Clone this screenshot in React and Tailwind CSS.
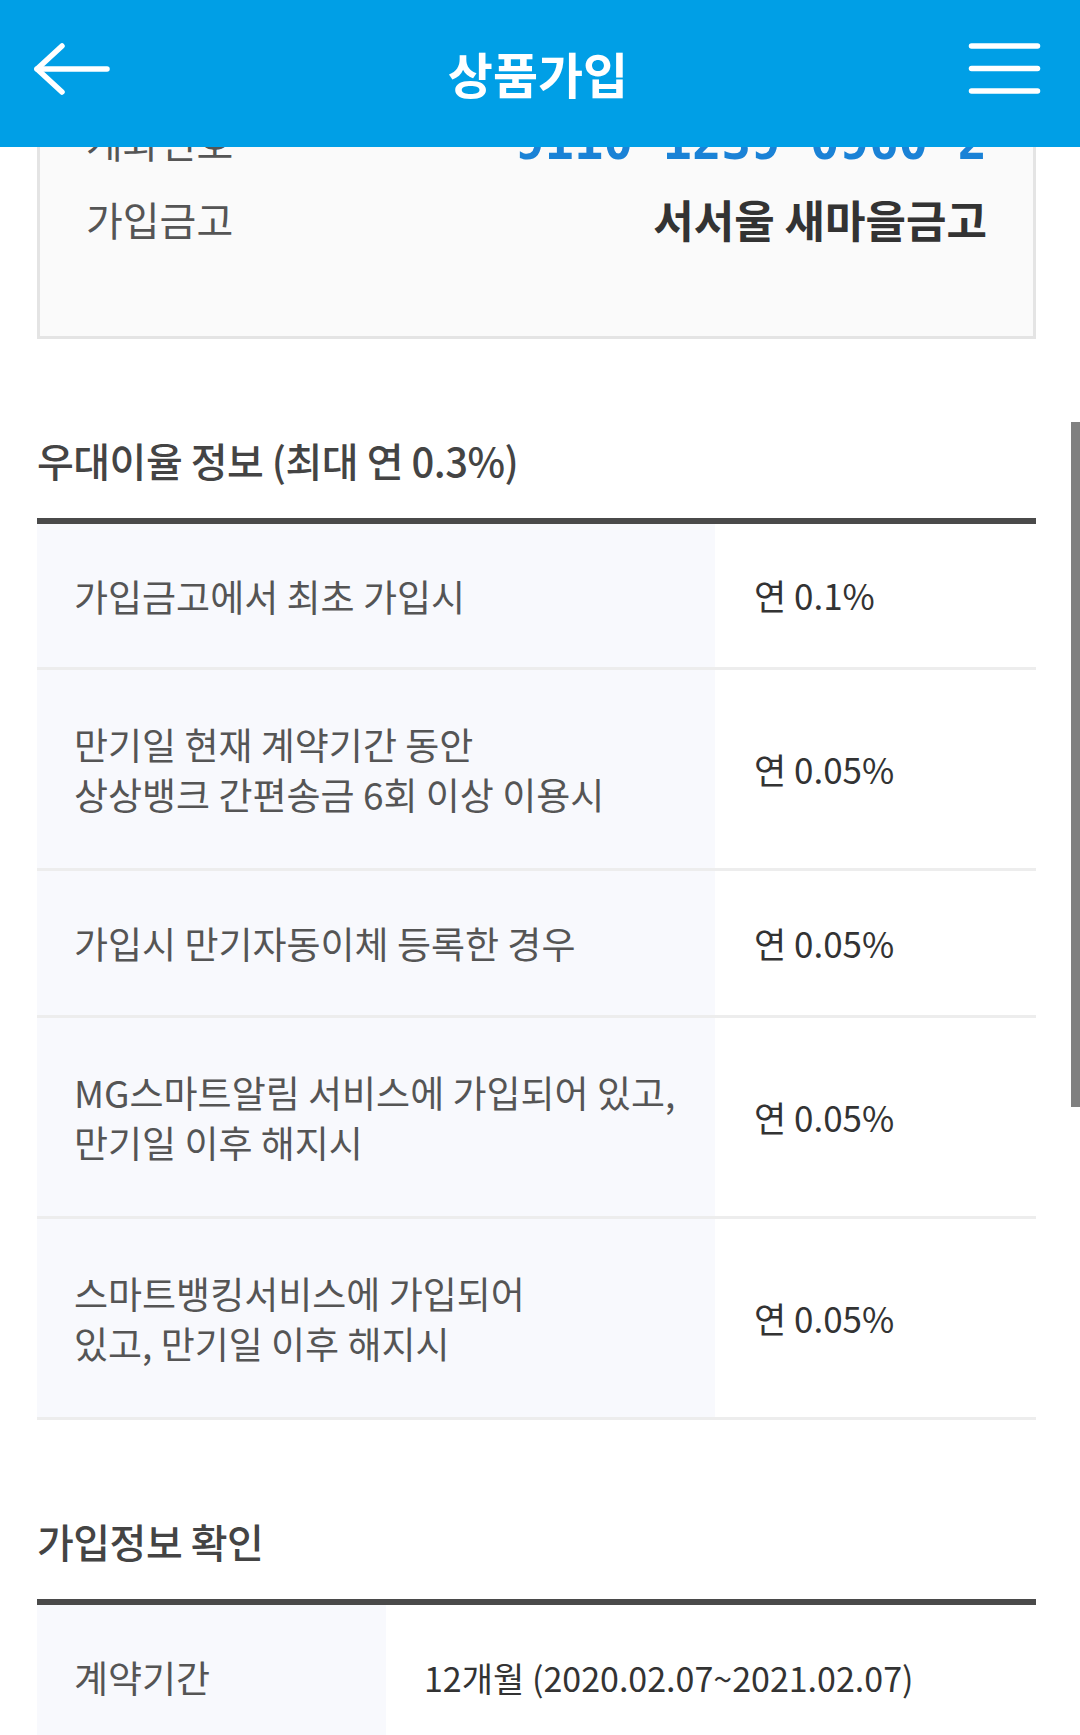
import React from 'react';

const rates = [
  { lines: ['가입금고에서 최초 가입시'], rate: '연 0.1%', height: 'h-[146px]' },
  { lines: ['만기일 현재 계약기간 동안', '상상뱅크 간편송금 6회 이상 이용시'], rate: '연 0.05%', height: 'h-[201px]' },
  { lines: ['가입시 만기자동이체 등록한 경우'], rate: '연 0.05%', height: 'h-[147px]' },
  { lines: ['MG스마트알림 서비스에 가입되어 있고,', '만기일 이후 해지시'], rate: '연 0.05%', height: 'h-[201px]' },
  { lines: ['스마트뱅킹서비스에 가입되어', '있고, 만기일 이후 해지시'], rate: '연 0.05%', height: 'h-[201px]' },
];

const accountParts = ['9110', '1239', '0960', '2'];

function BackIcon() {
  return (
    <svg width="76" height="52" viewBox="0 0 76 52" fill="none" stroke="white" strokeWidth="5.5" strokeLinecap="round" strokeLinejoin="round">
      <path d="M3 26H73" />
      <path d="M28 3L3 26L28 49" />
    </svg>
  );
}

function MenuIcon() {
  return (
    <svg width="77" height="52" viewBox="0 0 77 52" fill="none" stroke="white" strokeWidth="5.5" strokeLinecap="round">
      <path d="M5.5 3H71.5" />
      <path d="M5.5 25.5H71.5" />
      <path d="M5.5 48H71.5" />
    </svg>
  );
}

function SectionTitle({ children }) {
  return (
    <h2 className="mt-[96px] pb-[33px] text-[40px] leading-[50px] font-medium text-[#444] tracking-[-0.5px]">
      {children}
    </h2>
  );
}

export default function App() {
  return (
    <div className="relative h-[1735px] w-[1080px] overflow-hidden bg-white font-['Noto_Sans_CJK_KR','Noto_Sans',sans-serif]">
      {/* App bar over the scrolled page */}
      <header className="absolute inset-x-0 top-0 z-10 flex h-[147px] items-center justify-between bg-[#009fe6] pb-[10px] pl-[34px] pr-[37px]">
        <BackIcon />
        <h1 className="pt-[8px] text-[49px] font-bold leading-none text-white">상품가입</h1>
        <MenuIcon />
      </header>

      {/* Scroll indicator */}
      <div className="absolute right-0 top-[422px] z-10 h-[685px] w-[9px] bg-[#808080]" />

      <main className="pl-[37px] pr-[44px]">
        {/* Account summary card (top part scrolled under the bar) */}
        <div className="border-[3px] border-[#e4e4e4] bg-[#fafafa] pb-[78px] pl-[46px] pr-[46px] pt-[99px]">
          <div className="flex h-[78px] items-center justify-between">
            <span className="text-[40px] text-[#555]">계좌번호</span>
            <span className="mt-[4px] font-['DejaVu_Sans_Mono',monospace] text-[49px] font-bold text-[#1a82d6]">
              {accountParts.map((part, i) => (
                <React.Fragment key={i}>
                  {i > 0 && <span className="relative -top-[8px]">-</span>}
                  {part}
                </React.Fragment>
              ))}
            </span>
          </div>
          <div className="flex h-[78px] items-center justify-between">
            <span className="text-[40px] text-[#555]">가입금고</span>
            <span className="text-[44px] font-bold text-[#333]">서서울 새마을금고</span>
          </div>
        </div>

        <SectionTitle>우대이율 정보 (최대 연 0.3%)</SectionTitle>
        <div className="border-t-[6px] border-[#4a4a4a]">
          {rates.map((row, i) => (
            <div key={i} className={`flex border-b-[3px] border-[#ededed] ${row.height}`}>
              <div className="flex w-[678px] flex-col justify-center bg-[#f8f9fd] pl-[37px] text-[37px] leading-[50px] text-[#555]">
                {row.lines.map((line, j) => (
                  <span key={j}>{line}</span>
                ))}
              </div>
              <div className="flex flex-1 items-center pl-[39px] text-[35px] text-[#333]">{row.rate}</div>
            </div>
          ))}
        </div>

        <SectionTitle>가입정보 확인</SectionTitle>
        <div className="border-t-[6px] border-[#4a4a4a]">
          <div className="flex h-[148px] border-b-[3px] border-[#ededed]">
            <div className="flex w-[349px] items-center bg-[#f8f9fd] pl-[37px] text-[37px] text-[#555]">계약기간</div>
            <div className="flex flex-1 items-center pl-[38px] text-[34px] text-[#333]">12개월 (2020.02.07~2021.02.07)</div>
          </div>
        </div>
      </main>
    </div>
  );
}
